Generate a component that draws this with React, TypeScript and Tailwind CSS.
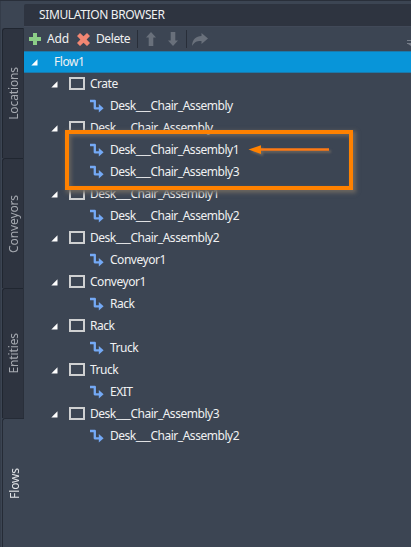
import React from "react";

type Node = { name: string; targets: string[] };

const tree: Node[] = [
  { name: "Crate", targets: ["Desk___Chair_Assembly"] },
  { name: "Desk___Chair_Assembly", targets: ["Desk___Chair_Assembly1", "Desk___Chair_Assembly3"] },
  { name: "Desk___Chair_Assembly1", targets: ["Desk___Chair_Assembly2"] },
  { name: "Desk___Chair_Assembly2", targets: ["Conveyor1"] },
  { name: "Conveyor1", targets: ["Rack"] },
  { name: "Rack", targets: ["Truck"] },
  { name: "Truck", targets: ["EXIT"] },
  { name: "Desk___Chair_Assembly3", targets: ["Desk___Chair_Assembly2"] },
];

function Expander() {
  return (
    <svg className="h-[7px] w-[7px] shrink-0" viewBox="0 0 7 7">
      <path d="M6.5 0.3V6.5H0.3Z" fill="#fff" />
    </svg>
  );
}

function FlowArrow() {
  return (
    <svg className="h-[14px] w-[14px] shrink-0" viewBox="0 0 14 14">
      <path d="M0 2H4.8V9.3H10" fill="none" stroke="#74a9f5" strokeWidth="2.3" strokeLinejoin="round" />
      <path d="M8.8 5.1L13.6 9.3L8.8 13.5Z" fill="#74a9f5" />
    </svg>
  );
}

function Tab({ label, active = false }: { label: string; active?: boolean }) {
  return (
    <div
      className={
        "flex h-[130px] w-[22px] shrink-0 items-center justify-center rounded-tl-[3px] border-t border-l pl-[2px] " +
        (active ? "border-[#252b36] bg-[#3c4553] text-[#e2e4e7]" : "border-[#202630] bg-[#2e3440] border-r border-r-[#292f3a] text-[#a5a9b0]")
      }
    >
      <span className="rotate-180 text-[12px] leading-[16px] tracking-[-0.12px] [writing-mode:vertical-rl]">{label}</span>
    </div>
  );
}

function Toolbar() {
  return (
    <div className="flex h-[25px] items-center border-t border-[#414958] text-[12px]">
      <svg className="ml-[5px] h-[12px] w-[12px]" viewBox="0 0 12 12">
        <path d="M4 0H8V4H12V8H8V12H4V8H0V4H4Z" fill="#8cce87" />
      </svg>
      <span className="ml-[6px] w-[22px] tracking-[-0.1px]">Add</span>
      <svg className="ml-[8px] h-[13px] w-[13px]" viewBox="0 0 13 13">
        <path d="M3 0L6.5 3.2L10 0L13 3L9.6 6.5L13 10L10 13L6.5 9.8L3 13L0 10L3.4 6.5L0 3Z" fill="#f18773" />
      </svg>
      <span className="ml-[6px] w-[35px] tracking-[-0.4px]">Delete</span>
      <span className="ml-[6px] h-[18px] w-px bg-[#282e39]" />
      <svg className="ml-[8px] h-[14px] w-[10px]" viewBox="0 0 10 14">
        <path d="M5 0L10 5.5H7.3V14H2.7V5.5H0Z" fill="#69707b" />
      </svg>
      <svg className="ml-[12px] h-[14px] w-[10px]" viewBox="0 0 10 14">
        <path d="M5 14L10 8.5H7.3V0H2.7V8.5H0Z" fill="#69707b" />
      </svg>
      <span className="ml-[8px] h-[18px] w-px bg-[#282e39]" />
      <svg className="ml-[5px] h-[13px] w-[16px]" viewBox="0 0 16 13">
        <path d="M9.5 0L16 5.5L9.5 11V8C5 7.8 2.5 9 0 13C.5 6 4 3.2 9.5 3Z" fill="#69707b" />
      </svg>
      <svg className="mt-[7px] ml-auto h-[7px] w-[4px]" viewBox="0 0 4 7">
        <path d="M0 1.5H4M0 4.5H4" stroke="#767d88" />
        <path d="M1 5H4V7Z" fill="#767d88" />
      </svg>
    </div>
  );
}

export default function App() {
  return (
    <div className="relative flex h-[547px] w-[411px] flex-col overflow-hidden bg-[#3c4553] font-['Noto_Sans','Open_Sans',sans-serif] text-[#f0f1f2]">
      <div className="h-px shrink-0 bg-[#292f3a]" />
      <div className="flex min-h-0 flex-1">
        <nav className="flex w-[24px] shrink-0 flex-col pt-[27px] pl-[2px] shadow-[inset_1px_0_#343c49]">
          <Tab label="Locations" />
          <Tab label="Conveyors" />
          <Tab label="Entities" />
          <Tab label="Flows" active />
        </nav>
        <main className="min-w-0 flex-1 pt-[3px]">
          <h1 className="flex h-[22px] items-center rounded-tl-[2px] bg-[#2e3440] pl-[15px] text-[12px] font-normal tracking-[-0.37px]">
            SIMULATION BROWSER
          </h1>
          <Toolbar />
          <div className="flex h-[22px] items-center border-y border-[#1b79ab] bg-[#0895d9] pl-[7px] text-[12px]">
            <Expander />
            <span className="ml-[16px] tracking-[-0.45px]">Flow1</span>
          </div>
          <div className="text-[12px] tracking-[-0.47px]">
            {tree.map((node) => (
              <div key={node.name}>
                <div className="flex h-[22px] items-center pl-[27px]">
                  <Expander />
                  <span className="mb-px ml-[11px] h-[13px] w-[16px] border-2 border-[#cfd0d1]" />
                  <span className="ml-[5px]">{node.name}</span>
                </div>
                {node.targets.map((target) => (
                  <div key={target} className="flex h-[22px] items-center pl-[66px]">
                    <FlowArrow />
                    <span className="ml-[6px]">{target}</span>
                  </div>
                ))}
              </div>
            ))}
          </div>
        </main>
      </div>
      <div className="absolute top-[130px] left-[65px] h-[60px] w-[288px] border-4 border-[#ff8100] shadow-[2px_2px_4px_1px_#6b6660,inset_2px_2px_4px_#6b6660]" />
      <svg className="absolute top-[143px] left-[248px] h-[14px] w-[84px] drop-shadow-[2px_2px_1px_#6b6660]" viewBox="0 0 84 14">
        <path d="M11 6.5H81" stroke="#ff7a14" strokeWidth="2.4" />
        <path d="M0.5 6.5L13 2.2V11Z" fill="#ff8100" />
      </svg>
    </div>
  );
}
